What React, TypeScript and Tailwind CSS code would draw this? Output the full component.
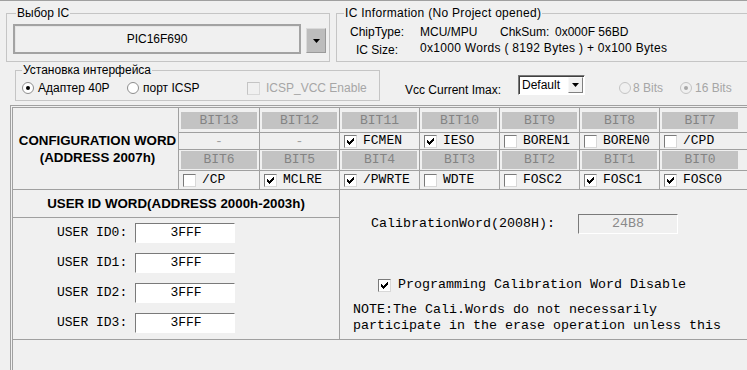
import React from "react";

const SANS = "font-['Liberation_Sans',Arial,sans-serif]";
const MONO = "font-['Liberation_Mono','Courier_New',monospace]";

const CHECK_PIXELS: [number, number, number][] = [
  [6, 0, 1],
  [5, 1, 2],
  [0, 2, 1],
  [4, 2, 3],
  [0, 3, 2],
  [3, 3, 3],
  [0, 4, 5],
  [1, 5, 3],
  [2, 6, 1],
];

function Check({ checked = false, disabled = false }: { checked?: boolean; disabled?: boolean }) {
  return (
    <span
      className={
        "flex h-[13px] w-[13px] shrink-0 items-center justify-center border border-t-[#7a7a7a] border-l-[#7a7a7a] border-r-[#d8d8d8] border-b-[#d8d8d8] " +
        (disabled ? "bg-[#f0f0f0] border-t-[#c4c4c4] border-l-[#c4c4c4]" : "bg-white")
      }
    >
      {checked && (
        <svg width="7" height="7" viewBox="0 0 7 7" shapeRendering="crispEdges">
          {CHECK_PIXELS.map(([x, y, w], i) => (
            <rect key={i} x={x} y={y} width={w} height={1} fill="#000" />
          ))}
        </svg>
      )}
    </span>
  );
}

function Radio({ checked = false, disabled = false }: { checked?: boolean; disabled?: boolean }) {
  return (
    <span
      className={
        "flex h-[12px] w-[12px] shrink-0 items-center justify-center rounded-full border " +
        (disabled ? "border-[#c4c4c4] bg-[#f0f0f0]" : "border-[#8d8d8d] bg-white")
      }
    >
      {checked && (
        <span className={"h-[4px] w-[4px] rounded-full " + (disabled ? "bg-[#a8a8a8]" : "bg-black")} />
      )}
    </span>
  );
}

function Tri() {
  return (
    <svg width="7" height="4" viewBox="0 0 7 4">
      <path d="M0 0H7L3.5 4Z" fill="#000" />
    </svg>
  );
}

const row1 = [
  { h: "BIT13", dash: true },
  { h: "BIT12", dash: true },
  { h: "BIT11", label: "FCMEN", checked: true },
  { h: "BIT10", label: "IESO", checked: true },
  { h: "BIT9", label: "BOREN1", checked: false },
  { h: "BIT8", label: "BOREN0", checked: false },
  { h: "BIT7", label: "/CPD", checked: false },
];

const row2 = [
  { h: "BIT6", label: "/CP", checked: false },
  { h: "BIT5", label: "MCLRE", checked: true },
  { h: "BIT4", label: "/PWRTE", checked: true },
  { h: "BIT3", label: "WDTE", checked: false },
  { h: "BIT2", label: "FOSC2", checked: false },
  { h: "BIT1", label: "FOSC1", checked: true },
  { h: "BIT0", label: "FOSC0", checked: true },
];

type Bit = { h: string; dash?: boolean; label?: string; checked?: boolean };

function HeaderCells({ bits, first }: { bits: Bit[]; first: boolean }) {
  return (
    <>
      {bits.map((b, i) => (
        <div
          key={b.h}
          className={
            "border-b border-[#a0a0a0] pl-[2px] pr-[2px] " +
            (i < 6 ? "border-r " : "") +
            (first ? "pt-[4px]" : "pt-[1px]")
          }
        >
          <div
            className={
              "flex items-center justify-center bg-[#c3c3c3] text-[13px] text-[#838383] " +
              MONO +
              (first ? " h-[17px]" : " h-[18px]")
            }
          >
            {b.h}
          </div>
        </div>
      ))}
      <div className="border-b border-[#a0a0a0]" />
    </>
  );
}

function ValueCells({ bits }: { bits: Bit[] }) {
  return (
    <>
      {bits.map((b, i) => (
        <div
          key={b.h}
          className={
            "flex items-center border-b border-[#a0a0a0] " +
            (i < 6 ? "border-r " : "") +
            (b.dash ? "justify-center" : "gap-[6px] pl-[4px]")
          }
        >
          {b.dash ? (
            <span className={"pt-[1px] text-[13px] leading-[16px] text-[#a0a0a0] " + MONO}>-</span>
          ) : (
            <>
              <Check checked={b.checked} />
              <span className={"text-[13px] leading-[16px] " + MONO}>{b.label}</span>
            </>
          )}
        </div>
      ))}
      <div className="border-b border-[#a0a0a0]" />
    </>
  );
}

export default function App() {
  return (
    <div
      className={
        "flex h-[370px] w-[747px] flex-col overflow-hidden border-t border-[#a0a0a0] bg-[#f0f0f0] text-[12px] leading-[16px] text-black " +
        SANS
      }
    >
      {/* Top row */}
      <div className="flex shrink-0 pl-[6px] pt-[12px]">
        <div className="relative h-[49px] w-[324px] shrink-0 border border-[#c5c5c5]">
          <span className="absolute left-[9px] top-[-8px] bg-[#f0f0f0] px-[1px] leading-[14px]">Выбор IC</span>
          <div className="flex pl-[6px] pt-[10px]">
            <div className="flex h-[30px] w-[288px] items-center justify-center border-2 border-[#a3a3a3] bg-[#f0f0f0] shadow-[inset_1px_1px_0_#e6e6e6]">
              PIC16F690
            </div>
            <div className="ml-[5px] mt-[4px] flex h-[25px] w-[20px] items-center justify-center border border-[#dadada] border-r-[#9a9a9a] border-b-[#9a9a9a] bg-[#bdbdbd]">
              <Tri />
            </div>
          </div>
        </div>
        <div className="relative ml-[6px] h-[49px] flex-1 border border-r-0 border-[#c5c5c5]">
          <span className="absolute left-[7px] top-[-8px] whitespace-nowrap bg-[#f0f0f0] px-[1px] leading-[14px] tracking-[0.3px]">
            IC Information (No Project opened)
          </span>
          <div className="flex flex-col pl-[10px] pt-[10px]">
            <div className="flex">
              <span className="w-[60px] text-center">ChipType:</span>
              <span className="ml-[13px] w-[80px]">MCU/MPU</span>
              <span className="w-[55px]">ChkSum:</span>
              <span>0x000F 56BD</span>
            </div>
            <div className="flex">
              <span className="mt-[2px] w-[60px] text-center">IC Size:</span>
              <span className="ml-[13px] whitespace-nowrap tracking-[0.3px]">0x1000 Words ( 8192 Bytes ) + 0x100 Bytes</span>
            </div>
          </div>
        </div>
      </div>

      {/* Interface row */}
      <div className="mt-[8px] flex h-[31px] shrink-0 items-start pl-[15px]">
        <div className="relative h-[31px] w-[365px] shrink-0 border border-[#c5c5c5]">
          <span className="absolute left-[6px] top-[-8px] bg-[#f0f0f0] px-[1px] leading-[14px]">
            Установка интерфейса
          </span>
          <div className="flex pl-[6px] pt-[9px]">
            <div className="flex w-[105px] items-center gap-[4px]">
              <Radio checked />
              <span>Адаптер 40P</span>
            </div>
            <div className="flex w-[120px] items-center gap-[4px]">
              <Radio />
              <span>порт ICSP</span>
            </div>
            <div className="flex items-center gap-[6px]">
              <Check disabled />
              <span className="whitespace-nowrap text-[#a6a6a6]">ICSP_VCC Enable</span>
            </div>
          </div>
        </div>
        <span className="ml-[25px] mt-[12px] w-[113px] shrink-0">Vcc Current Imax:</span>
        <div className="mt-[5px] flex h-[20px] w-[67px] shrink-0 items-center border border-t-[#7a7a7a] border-l-[#7a7a7a] border-r-white border-b-white bg-white shadow-[inset_1px_1px_0_#404040]">
          <span className="flex-1 pl-[3px] leading-[14px]">Default</span>
          <span className="mr-[1px] flex h-[16px] w-[15px] items-center justify-center border border-t-[#f8f8f8] border-l-[#f8f8f8] border-r-[#808080] border-b-[#808080] bg-[#f0f0f0]">
            <Tri />
          </span>
        </div>
        <div className="ml-[34px] mt-[10px] flex w-[61px] shrink-0 items-center gap-[2px]">
          <Radio disabled />
          <span className="text-[#a6a6a6]">8 Bits</span>
        </div>
        <div className="mt-[10px] flex shrink-0 items-center gap-[3px]">
          <Radio disabled checked />
          <span className="whitespace-nowrap text-[#a6a6a6]">16 Bits</span>
        </div>
      </div>

      {/* Main frame */}
      <div className="ml-[10px] mt-[4px] flex flex-1 flex-col border-l border-t border-[#a0a0a0] pl-px pt-px">
        <div className="flex flex-1 flex-col border-l border-t border-[#a0a0a0]">
          <div className="grid shrink-0 grid-cols-[166px_81px_80px_80px_80px_80px_80px_80px_1fr] grid-rows-[25px_17px_21px_19px]">
            <div className="row-span-4 flex flex-col items-center justify-center border-r border-b border-[#a0a0a0] pl-[4px] text-[13.33px] font-bold leading-[17px]">
              <span className="whitespace-nowrap">CONFIGURATION WORD</span>
              <span>(ADDRESS 2007h)</span>
            </div>
            <HeaderCells bits={row1} first />
            <ValueCells bits={row1} />
            <HeaderCells bits={row2} first={false} />
            <ValueCells bits={row2} />
          </div>

          <div className="flex h-[150px] shrink-0 border-b border-[#a0a0a0]">
            <div className="flex w-[327px] shrink-0 flex-col border-r border-[#a0a0a0]">
              <div className="flex h-[28px] items-center justify-center border-b border-[#a0a0a0] text-[13.33px] font-bold">
                USER ID WORD(ADDRESS 2000h-2003h)
              </div>
              <div className="flex flex-col gap-[10px] pl-[44px] pt-[5px]">
                {["USER ID0:", "USER ID1:", "USER ID2:", "USER ID3:"].map((l) => (
                  <div key={l} className={"flex h-[20px] items-center text-[13px] " + MONO}>
                    <span className="w-[78px]">{l}</span>
                    <div className="flex h-[20px] w-[100px] items-center justify-center border border-t-[#7a7a7a] border-l-[#7a7a7a] border-r-white border-b-white bg-white pl-[2px]">
                      3FFF
                    </div>
                  </div>
                ))}
              </div>
            </div>
            <div className={"flex flex-1 flex-col text-[13.33px] " + MONO}>
              <div className="mt-[24px] flex items-center pl-[31px]">
                <span className="w-[207px] whitespace-nowrap">CalibrationWord(2008H):</span>
                <div className="flex h-[20px] w-[100px] items-center justify-center border border-t-[#7a7a7a] border-l-[#7a7a7a] border-r-white border-b-white text-[#8a8a8a]">
                  24B8
                </div>
              </div>
              <div className="mt-[43px] flex items-center gap-[7px] pl-[38px]">
                <Check checked />
                <span className="whitespace-nowrap">Programming Calibration Word Disable</span>
              </div>
              <div className="mt-[9px] whitespace-nowrap pl-[13px] leading-[16px]">
                <div>NOTE:The Cali.Words do not necessarily</div>
                <div>participate in the erase operation unless this</div>
              </div>
            </div>
          </div>
          <div className="flex-1" />
        </div>
      </div>
    </div>
  );
}
